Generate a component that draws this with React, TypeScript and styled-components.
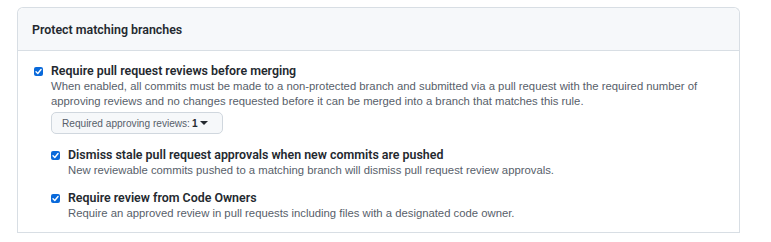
import React from "react";
import styled, { createGlobalStyle } from "styled-components";

const Global = createGlobalStyle`
  html, body { margin: 0; padding: 0; background: #ffffff; }
  body { font-family: "Liberation Sans", Arial, sans-serif; color: #24292f; }
`;

const Page = styled.div`
  padding: 7px 31px 0 17px;
`;

const Box = styled.section`
  border: 1px solid #d8dee4;
  border-radius: 6px 6px 0 0;
  border-bottom: none;
`;

const BoxHeader = styled.header`
  height: 42px;
  display: flex;
  align-items: center;
  padding: 0 14px;
  background: #f6f8fa;
  border-bottom: 1px solid #d8dee4;
  border-radius: 6px 6px 0 0;
`;

const Title = styled.h3`
  margin: 0;
  font-family: Roboto, "Liberation Sans", sans-serif;
  font-size: 12.4px;
  font-weight: 600;
  color: #24292f;
`;

const BoxBody = styled.div`
  padding: 12px 16px 11px 16px;
  border-bottom: 1px solid #d8dee4;
`;

const Option = styled.div<{ $nested?: boolean }>`
  display: grid;
  grid-template-columns: 9px 1fr;
  column-gap: 8px;
  margin-top: ${(p) => (p.$nested ? "12px" : "0")};
`;

const Check = styled.span`
  width: 9px;
  height: 9px;
  margin-top: 4px;
  border-radius: 2px;
  background: #0969da;
  display: flex;
  align-items: center;
  justify-content: center;
`;

const OptionText = styled.div`
  display: flex;
  flex-direction: column;
`;

const Label = styled.div`
  font-family: Roboto, "Liberation Sans", sans-serif;
  font-size: 12.4px;
  font-weight: 600;
  line-height: 16px;
  color: #24292f;
`;

const Note = styled.p`
  margin: 0;
  font-size: 11.3px;
  line-height: 15px;
  color: #57606a;
  white-space: nowrap;
`;

const Nested = styled.div`
  padding-top: 1px;
`;

const SelectButton = styled.button`
  margin-top: 3px;
  align-self: flex-start;
  height: 22px;
  width: 172px;
  padding: 0 0 0 10px;
  display: flex;
  align-items: center;
  gap: 2px;
  white-space: nowrap;
  background: #f6f8fa;
  border: 1px solid #d0d7de;
  border-radius: 5px;
  font-family: inherit;
  font-size: 10.1px;
  color: #57606a;
`;

const SelectValue = styled.b`
  color: #24292f;
  font-weight: 700;
`;

const Caret = styled.span`
  width: 0;
  height: 0;
  border-left: 4px solid transparent;
  border-right: 4px solid transparent;
  border-top: 4px solid #24292f;
`;

const Tick = () => (
  <svg width="7" height="7" viewBox="0 0 8 8" aria-hidden="true">
    <path d="M1.2 4.3 L3.2 6.2 L6.9 1.8" stroke="#fff" strokeWidth="1.6" fill="none" strokeLinecap="round" strokeLinejoin="round" />
  </svg>
);

export default function App() {
  return (
    <Page>
      <Global />
      <Box>
        <BoxHeader>
          <Title>Protect matching branches</Title>
        </BoxHeader>
        <BoxBody>
          <Option>
            <Check><Tick /></Check>
            <OptionText>
              <Label>Require pull request reviews before merging</Label>
              <Note>
                When enabled, all commits must be made to a non-protected branch and submitted via a pull request with the required number of
                <br />
                approving reviews and no changes requested before it can be merged into a branch that matches this rule.
              </Note>
              <SelectButton type="button">
                Required approving reviews: <SelectValue>1</SelectValue>
                <Caret />
              </SelectButton>
              <Nested>
                <Option $nested>
                  <Check><Tick /></Check>
                  <OptionText>
                    <Label>Dismiss stale pull request approvals when new commits are pushed</Label>
                    <Note>New reviewable commits pushed to a matching branch will dismiss pull request review approvals.</Note>
                  </OptionText>
                </Option>
                <Option $nested>
                  <Check><Tick /></Check>
                  <OptionText>
                    <Label>Require review from Code Owners</Label>
                    <Note>Require an approved review in pull requests including files with a designated code owner.</Note>
                  </OptionText>
                </Option>
              </Nested>
            </OptionText>
          </Option>
        </BoxBody>
      </Box>
    </Page>
  );
}
